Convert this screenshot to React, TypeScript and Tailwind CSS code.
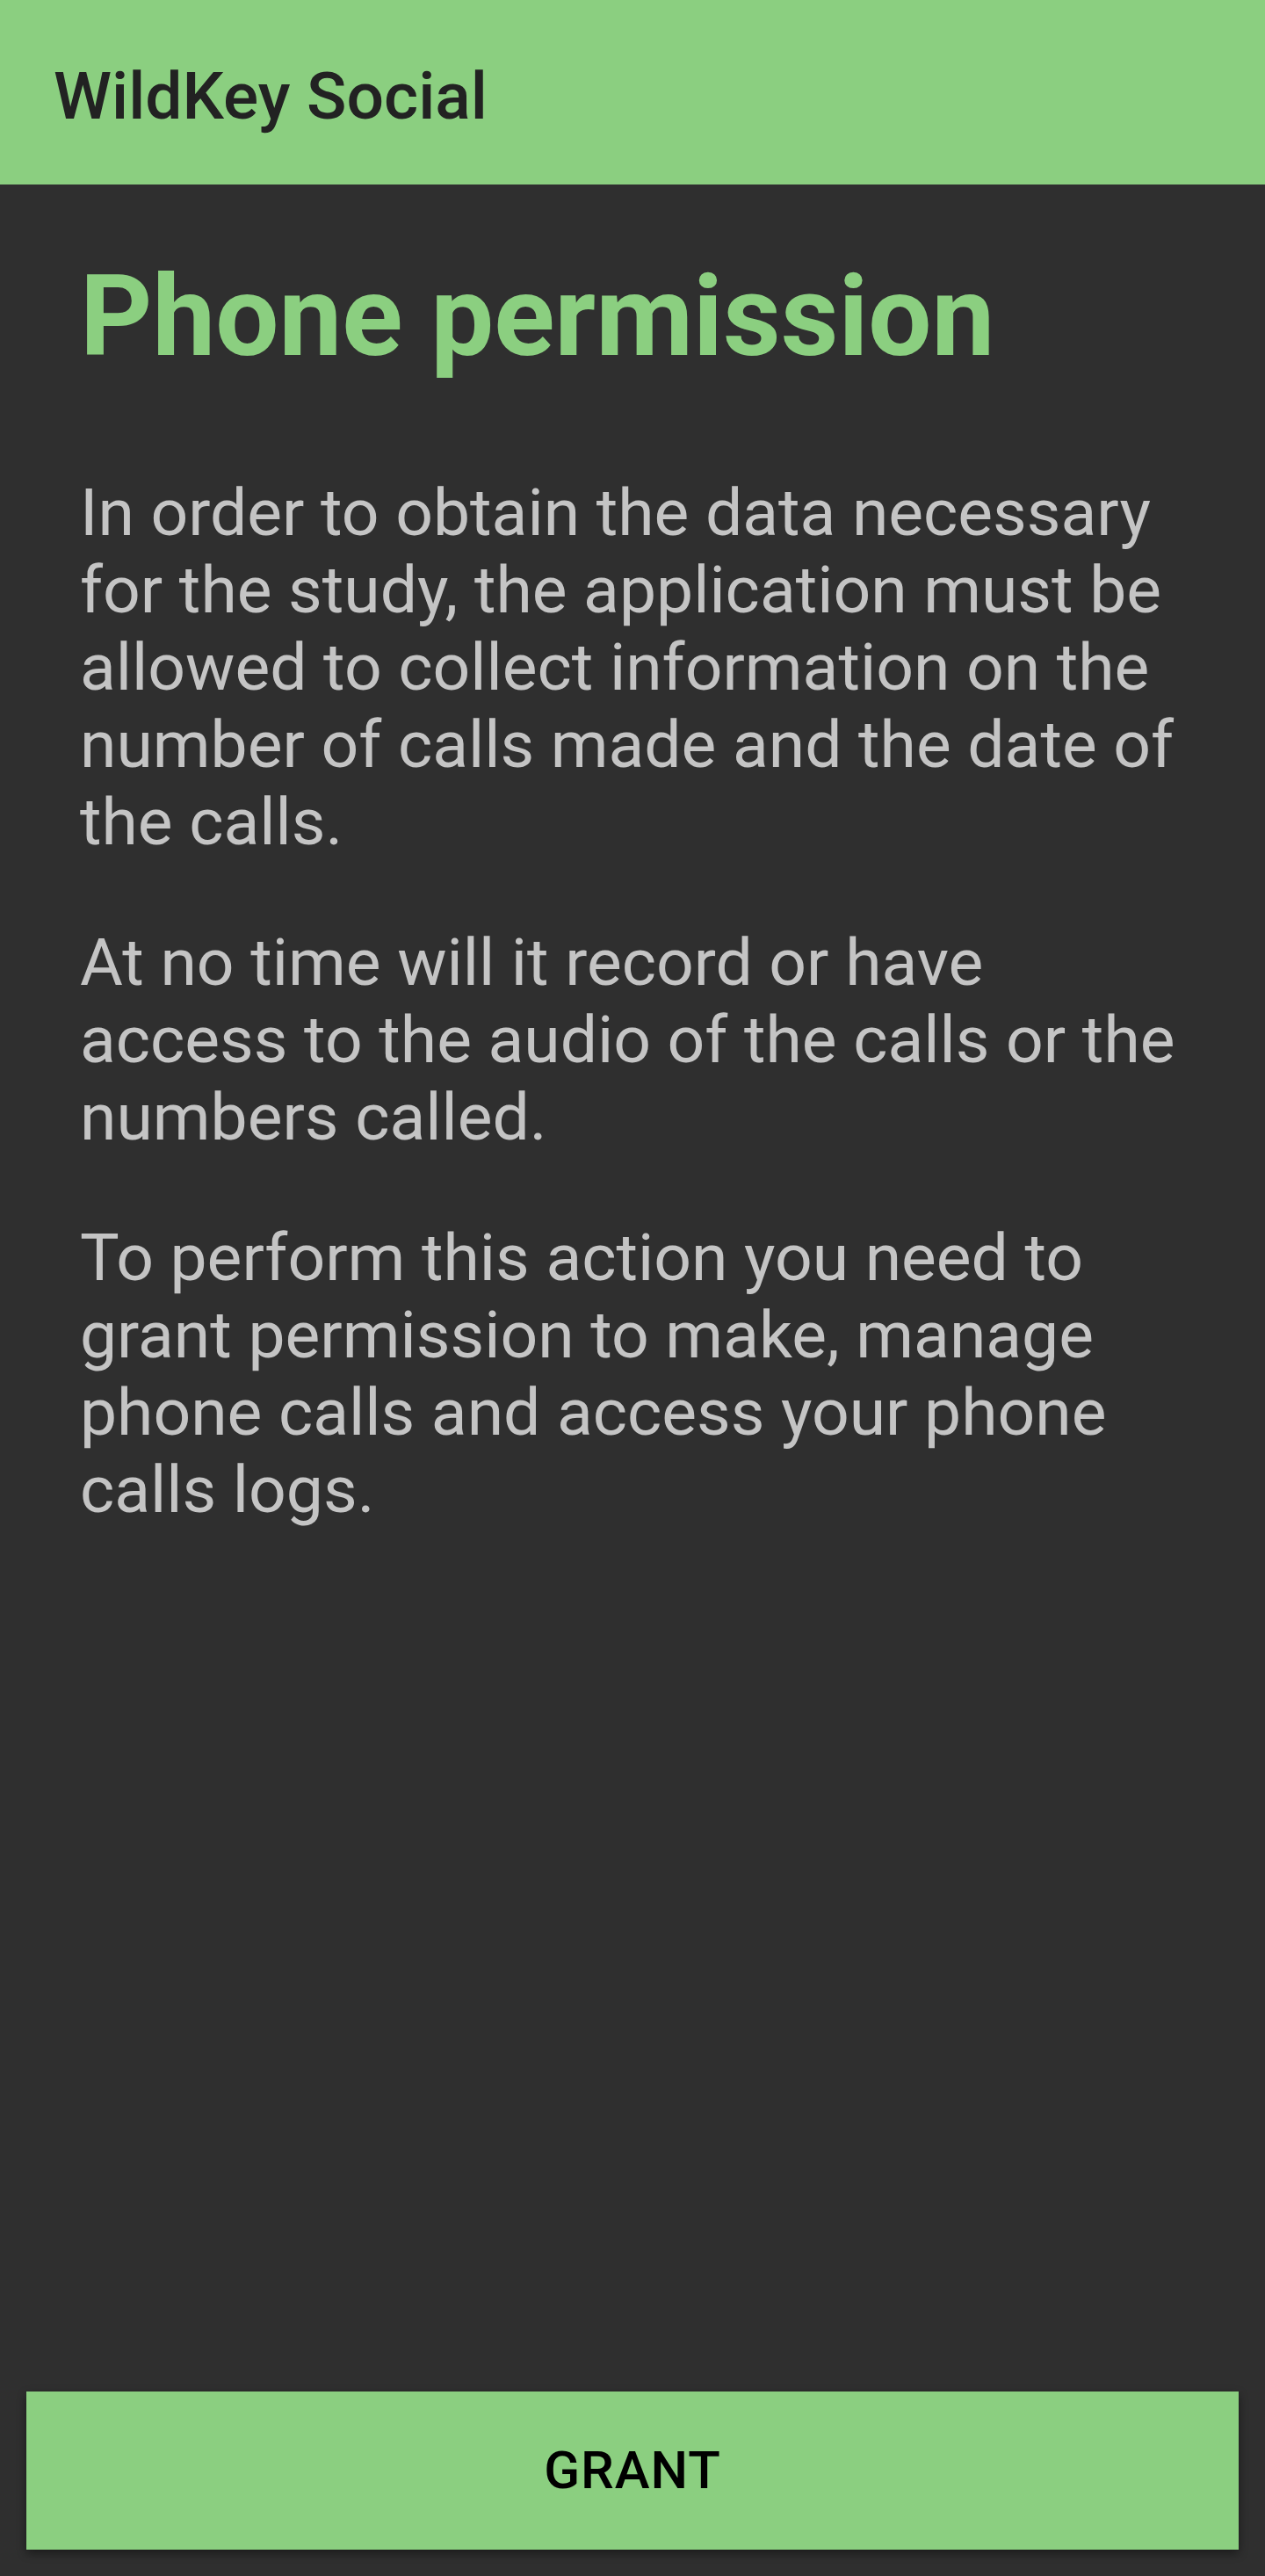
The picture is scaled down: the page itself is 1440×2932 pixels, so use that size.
import React from "react";

const paragraphs = [
  "In order to obtain the data necessary for the study, the application must be allowed to collect information on the number of calls made and the date of the calls.",
  "At no time will it record or have access to the audio of the calls or the numbers called.",
  "To perform this action you need to grant permission to make, manage phone calls and access your phone calls logs.",
];

export default function App() {
  return (
    <div
      className="min-h-screen flex flex-col bg-[#2f2f2f]"
      style={{ fontFamily: "Roboto, 'Noto Sans', sans-serif" }}
    >
      <header className="h-[210px] bg-[#8bcf80] flex items-center pt-2 px-[61px]">
        <h1 className="text-[75px] leading-normal font-medium text-[#222222]">
          WildKey Social
        </h1>
      </header>

      <main className="flex-1 px-[91px] pt-[54px]">
        <h2 className="text-[128px] leading-normal font-bold text-[#8bcf80]">
          Phone permission
        </h2>
        <div className="mt-[83px] flex flex-col gap-[72px]">
          {paragraphs.map((p, i) => (
            <p key={i} className="text-[75px] leading-[88px] text-[#c4c4c4]">
              {p}
            </p>
          ))}
        </div>
      </main>

      <div className="px-[30px] pb-[30px]">
        <button className="w-full h-[180px] bg-[#8bcf80] shadow-[0_4px_10px_rgba(0,0,0,0.45)] text-[60px] font-medium text-black tracking-[1px]">
          GRANT
        </button>
      </div>
    </div>
  );
}
